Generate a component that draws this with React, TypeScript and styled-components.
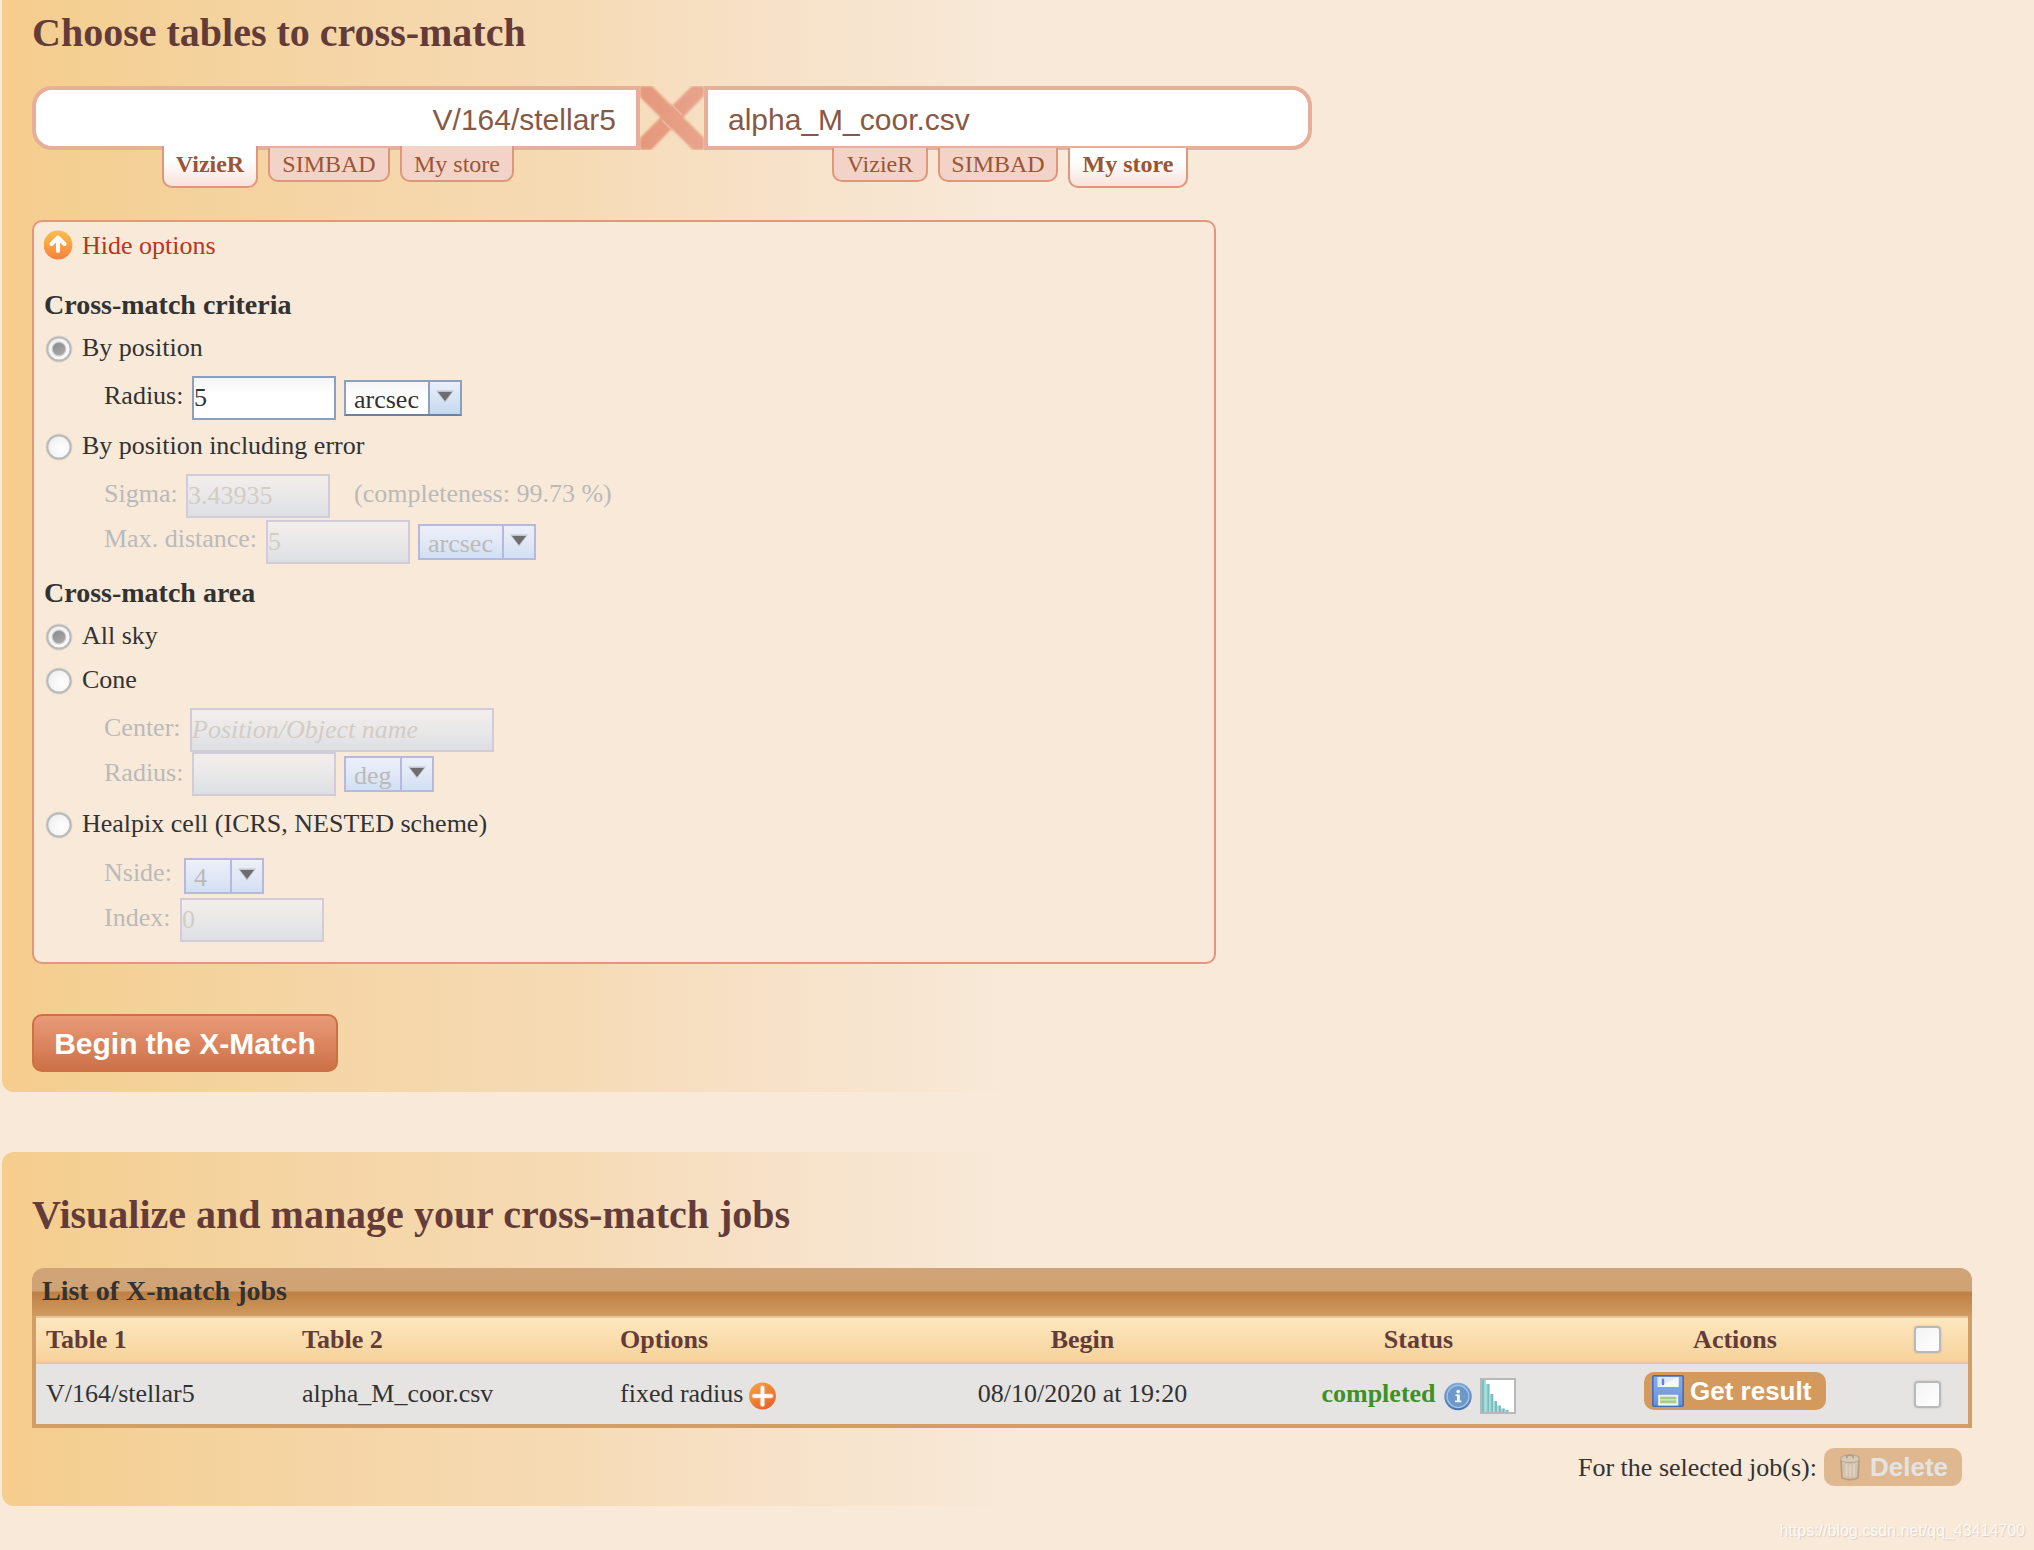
import React from "react";
import styled, { createGlobalStyle, css } from "styled-components";

const serif = `"Liberation Serif", "Times New Roman", Times, serif`;
const sans = `"Liberation Sans", Arial, Helvetica, sans-serif`;

const GlobalStyle = createGlobalStyle`
  *, *::before, *::after { box-sizing: border-box; }
  html, body { margin: 0; padding: 0; }
  body {
    background: #f8e9d9;
    color: #323232;
    font-family: ${serif};
    font-size: 26px;
    line-height: 30px;
    overflow: hidden;
  }
  svg { display: block; flex: none; }
`;

const Page = styled.main`
  height: 1550px;
  padding-left: 2px;
  display: flex;
  flex-direction: column;
`;

const Panel = styled.section<{ $first?: boolean }>`
  height: ${(p) => (p.$first ? 1092 : 354)}px;
  margin-top: ${(p) => (p.$first ? 0 : 60)}px;
  padding: ${(p) => (p.$first ? 9 : 39)}px 62px 0 30px;
  border-radius: ${(p) => (p.$first ? "0 0 0 12px" : "12px 0 0 12px")};
  background: linear-gradient(90deg, #f5cd8d 0, #f4d095 100px, #f5d6a8 360px, #f6dab4 560px, #f7e1c7 760px, #f8e9d9 1016px);
  display: flex;
  flex-direction: column;
  align-items: flex-start;
  flex: none;
`;

const Heading = styled.h2`
  margin: 0;
  height: 47px;
  color: #633c3a;
  font-size: 40px;
  font-weight: bold;
  line-height: 47px;
  white-space: nowrap;
`;

/* ---------- table pickers ---------- */

const Pickers = styled.div`
  display: flex;
  margin-top: 30px;
  height: 134px;
`;

const Picker = styled.div`
  width: 608px;
  display: flex;
  flex-direction: column;
`;

const TableInput = styled.div<{ $side: "left" | "right" }>`
  height: 64px;
  flex: none;
  border: 4px solid #e7ae99;
  border-radius: ${(p) => (p.$side === "left" ? "20px 0 0 20px" : "0 20px 20px 0")};
  background: #fff;
  color: #865945;
  font: 30px/54px ${sans};
  padding: 3px 20px 0;
  text-align: ${(p) => (p.$side === "left" ? "right" : "left")};
`;

const CrossMark = styled.div`
  width: 64px;
  height: 64px;
`;

const Tabs = styled.div<{ $inset: number; $columns: string }>`
  display: grid;
  grid-template-columns: ${(p) => p.$columns};
  column-gap: 10px;
  align-items: start;
  padding-left: ${(p) => p.$inset}px;
  margin-top: -4px;
  position: relative;
`;

const Tab = styled.div<{ $active?: boolean; $low?: boolean }>`
  height: ${(p) => (p.$active ? 42 : 36) - (p.$low ? 2 : 0)}px;
  margin-top: ${(p) => (p.$low ? 2 : 0)}px;
  padding-top: ${(p) => (p.$low ? 2 : 4)}px;
  border: 2px solid #e29679;
  border-top: 0;
  border-radius: 0 0 10px 10px;
  background: ${(p) => (p.$active ? "linear-gradient(#fff 35%, #f9e2da)" : "#f3d3c7")};
  color: #9a5535;
  font-size: 24px;
  font-weight: ${(p) => (p.$active ? "bold" : "normal")};
  line-height: 29px;
  text-align: center;
  white-space: nowrap;
`;

/* ---------- options ---------- */

const Options = styled.div`
  width: 1184px;
  height: 744px;
  flex: none;
  border: 2px solid #e4957a;
  border-radius: 10px;
  background: #f8e9d9;
  padding-left: 10px;
  display: flex;
  flex-direction: column;
`;

const HideOptions = styled.a`
  display: flex;
  align-items: center;
  gap: 8px;
  height: 46px;
  color: #b73620;
`;

const LinkText = styled.span`
  padding-top: 2px;
`;

const GroupTitle = styled.h3<{ $top: number }>`
  margin: ${(p) => p.$top}px 0 0;
  font-size: 28px;
  line-height: 37px;
  height: 37px;
`;

const Choice = styled.label<{ $top: number }>`
  display: flex;
  align-items: center;
  gap: 8px;
  height: 30px;
  line-height: 30px;
  margin-top: ${(p) => p.$top}px;
  svg { margin-top: 3px; }
`;

const ChoiceText = styled.span`
  padding-top: 2px;
  white-space: nowrap;
`;

const FieldRow = styled.div<{ $top?: number; $disabled?: boolean }>`
  display: flex;
  align-items: center;
  height: 44px;
  margin-top: ${(p) => p.$top ?? 0}px;
  padding-left: 60px;
  color: ${(p) => (p.$disabled ? "#bababa" : "#323232")};
`;

const FieldLabel = styled.span<{ $width: number; $raise?: number }>`
  width: ${(p) => p.$width}px;
  padding-bottom: ${(p) => p.$raise ?? 4}px;
  white-space: nowrap;
`;

const Hint = styled.span`
  margin-left: 24px;
  padding-bottom: 4px;
`;

const TextBox = styled.div<{ $width?: number; $disabled?: boolean; $italic?: boolean }>`
  width: ${(p) => p.$width ?? 144}px;
  height: 44px;
  border: 2px solid #8aa0c0;
  background: linear-gradient(#f5f5f5, #fff 40%);
  line-height: 39px;
  white-space: nowrap;
  font-style: ${(p) => (p.$italic ? "italic" : "normal")};
  ${(p) =>
    p.$disabled &&
    css`
      border-color: #d2cbd9;
      background: linear-gradient(#f2eeeb, #e7e7e8 60%, #dcdfe3);
      color: #d3ccc5;
    `}
`;

const SelectBox = styled.div<{ $disabled?: boolean; $width: number; $gap?: boolean }>`
  display: flex;
  width: ${(p) => p.$width}px;
  height: 36px;
  margin-left: ${(p) => (p.$gap ? 8 : 0)}px;
  border: 2px solid ${(p) => (p.$disabled ? "#b6b8de" : "#8ba1c0")};
  border-bottom-color: ${(p) => (p.$disabled ? "#b6b8de" : "#6981a6")};
  background: ${(p) =>
    p.$disabled ? "linear-gradient(#edf0fa, #dfe6f5 60%, #d0e0f2)" : "linear-gradient(#f5f5f5, #fff 50%)"};
`;

const SelectText = styled.span`
  flex: 1;
  padding: 2px 0 0 8px;
  line-height: 32px;
`;

const SelectArrow = styled.span<{ $disabled?: boolean }>`
  width: 32px;
  border-left: 2px solid ${(p) => (p.$disabled ? "#b6b8de" : "#8ba1c0")};
  background: ${(p) => (p.$disabled ? "none" : "linear-gradient(#eaf0fb, #c5d8ee)")};
  display: flex;
  justify-content: center;
  padding-top: 6px;
`;

const BeginButton = styled.button`
  width: 306px;
  height: 58px;
  margin-top: 50px;
  padding: 1px 0 0;
  border: 2px solid #ce6f46;
  border-radius: 10px;
  background: linear-gradient(#e99a78, #cd7147);
  color: #fff;
  font: bold 30px/52px ${sans};
  white-space: nowrap;
`;

/* ---------- jobs ---------- */

const Jobs = styled.div`
  width: 1940px;
  height: 160px;
  flex: none;
  margin-top: 30px;
`;

const JobsTitle = styled.div`
  height: 48px;
  padding-left: 10px;
  border-radius: 12px 12px 0 0;
  background: linear-gradient(#d1a478 0, #d0a375 23px, #be8044 24px, #d09a60 48px);
  font-size: 28px;
  font-weight: bold;
  line-height: 45px;
`;

const JobsGrid = styled.div`
  border: 4px solid #d39d66;
  border-top: 0;
`;

const columns = "256px 318px 302px 341px 331px 302px 82px";

const HeadRow = styled.div`
  display: grid;
  grid-template-columns: ${columns};
  height: 48px;
  border-top: 2px solid #e7c69d;
  border-bottom: 2px solid #e7c69d;
  background: linear-gradient(#fee7bf, #f6d299);
  color: #633c3a;
  font-weight: bold;
`;

const JobRow = styled.div`
  display: grid;
  grid-template-columns: ${columns};
  height: 60px;
  background: #e5e4e2;
`;

const Cell = styled.div<{ $center?: boolean; $gap?: number; $raise?: number }>`
  display: flex;
  align-items: center;
  justify-content: ${(p) => (p.$center ? "center" : "flex-start")};
  gap: ${(p) => p.$gap ?? 0}px;
  padding: 0 ${(p) => (p.$center ? 0 : 10)}px ${(p) => p.$raise ?? 0}px;
  white-space: nowrap;
`;

const Completed = styled.b`
  color: #3c9127;
`;

const Lowered = styled.span`
  padding-top: 4px;
`;

const SmallButton = styled.button<{ $width: number; $disabled?: boolean }>`
  display: flex;
  align-items: center;
  gap: 6px;
  width: ${(p) => p.$width}px;
  height: 38px;
  padding: 0 0 0 ${(p) => (p.$disabled ? 12 : 8)}px;
  border: 0;
  border-radius: 10px;
  background: ${(p) => (p.$disabled ? "#dfb88f" : "#d4995d")};
  color: ${(p) => (p.$disabled ? "#e3e3e3" : "#fff")};
  font: bold 26px/38px ${sans};
  white-space: nowrap;
`;

const SelectedActions = styled.div`
  align-self: flex-end;
  display: flex;
  align-items: center;
  gap: 7px;
  height: 38px;
  margin: 20px 10px 0 0;
  white-space: nowrap;
`;

const SelectedLabel = styled.span`
  padding-top: 2px;
`;

const CheckBox = styled.span`
  width: 27px;
  height: 27px;
  border: 2px solid #b9b9b9;
  border-radius: 4px;
  background: linear-gradient(135deg, #f3f3f3, #fff);
  box-shadow: 0 0 2px rgba(150, 150, 150, 0.5);
`;

const Watermark = styled.div`
  align-self: flex-end;
  margin: 16px 9px 0 0;
  color: #fdf8f3;
  font: 16px/18px ${sans};
  text-shadow: 1px 1px 1px #d9cec3;
`;

/* ---------- drawings ---------- */

const CrossIcon = () => (
  <svg width="64" height="64" viewBox="0 0 64 64">
    <defs>
      <linearGradient id="crossFill" x1="0" x2="1">
        <stop offset="0" stopColor="#e5977b" />
        <stop offset="1" stopColor="#e7a48c" />
      </linearGradient>
      <filter id="soft" x="-5%" y="-5%" width="110%" height="110%">
        <feGaussianBlur stdDeviation="0.9" />
      </filter>
    </defs>
    <g filter="url(#soft)">
      <path d="M0 52 L52 0 L64 0 L64 10 L11 64 L0 64Z" fill="url(#crossFill)" />
      <path d="M0 0 L12 0 L64 52 L64 64 L53 64 L0 11Z" fill="url(#crossFill)" />
    </g>
    <path d="M22 34 L33 45 M31 18 L42 29" stroke="#edb8a2" strokeWidth="1.5" fill="none" />
  </svg>
);

const UpIcon = () => (
  <svg width="30" height="30" viewBox="0 0 30 30">
    <defs>
      <linearGradient id="upFill" x1="0" x2="0" y1="0" y2="1">
        <stop offset="0" stopColor="#f9bd49" />
        <stop offset="0.5" stopColor="#f8a244" />
        <stop offset="1" stopColor="#f67f40" />
      </linearGradient>
    </defs>
    <circle cx="14" cy="15" r="14.4" fill="url(#upFill)" />
    <path d="M14 9 V21" stroke="#fff" strokeWidth="4" strokeLinecap="round" />
    <path d="M7.5 14 L14 7.5 L20.5 14" stroke="#fff" strokeWidth="4" fill="none" strokeLinecap="round" strokeLinejoin="round" />
  </svg>
);

const RadioIcon = ({ checked }: { checked?: boolean }) => (
  <svg width="30" height="28" viewBox="0 0 30 28">
    <defs>
      <radialGradient id="radioBg" cx="0.6" cy="0.6" r="0.6">
        <stop offset="0" stopColor="#fff" />
        <stop offset="1" stopColor="#f0f0f0" />
      </radialGradient>
      <linearGradient id="radioDot" x1="0.2" y1="0" x2="0.8" y2="1">
        <stop offset="0" stopColor="#8c8c8c" />
        <stop offset="1" stopColor="#a9a9a9" />
      </linearGradient>
    </defs>
    <circle cx="15" cy="14" r="13.4" fill="#cfc9c2" opacity="0.6" />
    <circle cx="15" cy="14" r="11.6" fill="url(#radioBg)" stroke="#b9b9b9" strokeWidth="2" />
    {checked && <circle cx="15" cy="14" r="7.4" fill="#c9cbcd" />}
    {checked && <circle cx="15" cy="14" r="6.2" fill="url(#radioDot)" />}
  </svg>
);

const ArrowIcon = () => (
  <svg width="20" height="16" viewBox="0 0 20 16">
    <path d="M1 2.5 H19 L10 14.5Z" fill="#a9abb0" opacity="0.6" />
    <path d="M3 4 H17 L10 13Z" fill="#6d6d6d" />
  </svg>
);

const PlusIcon = () => (
  <svg width="28" height="28" viewBox="0 0 28 28">
    <defs>
      <linearGradient id="plusFill" x1="0.2" x2="0.8" y1="0" y2="1">
        <stop offset="0" stopColor="#f3a13c" />
        <stop offset="1" stopColor="#e4602c" />
      </linearGradient>
    </defs>
    <circle cx="13.5" cy="14" r="13.4" fill="url(#plusFill)" />
    <path d="M13.5 5.5 V22.5 M5 14 H22" stroke="#f2a070" strokeWidth="5.5" strokeLinecap="round" />
    <path d="M13.5 5.5 V22.5 M5 14 H22" stroke="#fff" strokeWidth="3.6" strokeLinecap="round" />
  </svg>
);

const InfoIcon = () => (
  <svg width="28" height="29" viewBox="0 0 29 29">
    <defs>
      <linearGradient id="infoFill" x1="0" x2="0" y1="0" y2="1">
        <stop offset="0" stopColor="#7fa9d9" />
        <stop offset="1" stopColor="#4a72b0" />
      </linearGradient>
    </defs>
    <circle cx="14.5" cy="14.5" r="14.2" fill="url(#infoFill)" />
    <circle cx="14.5" cy="14.5" r="11.4" fill="#6c99ca" stroke="#a5c4e6" strokeWidth="1.3" />
    <circle cx="14.7" cy="9.3" r="1.9" fill="#f4f8fc" />
    <path d="M11.8 13.2 H15 M11.4 19.6 H18" stroke="#f4f8fc" strokeWidth="1.8" fill="none" />
    <path d="M14.9 12.4 V20" stroke="#f4f8fc" strokeWidth="3" />
  </svg>
);

const bars = [32, 28, 18, 11, 6.5, 3.5, 2];

const HistogramIcon = () => (
  <svg width="36" height="36" viewBox="0 0 36 36">
    <rect x="1" y="1" width="34" height="34" fill="#fff" stroke="#b8b8b8" strokeWidth="2" />
    {bars.map((h, i) => (
      <g key={i}>
        <rect x={2 + i * 3.8} y={34 - h} width="3.8" height={h} fill="#a4d6d6" />
        <rect x={3.6 + i * 3.8 - (i ? 0 : 1.6)} y={34 - h} width="1.9" height={h} fill="#74bfbf" />
      </g>
    ))}
  </svg>
);

const FloppyIcon = () => (
  <svg width="32" height="32" viewBox="0 0 32 32">
    <defs>
      <linearGradient id="disk" x1="0" x2="0" y1="0" y2="1">
        <stop offset="0" stopColor="#86abe6" />
        <stop offset="0.5" stopColor="#7ba0e0" />
        <stop offset="1" stopColor="#6592d8" />
      </linearGradient>
    </defs>
    <rect x="0" y="0" width="32" height="32" rx="2" fill="#416db8" />
    <rect x="1.6" y="1.6" width="28.8" height="28.8" rx="1" fill="url(#disk)" />
    <rect x="5.5" y="2" width="21" height="10" fill="#e3e9f4" />
    <path d="M5.5 12 L26.5 2 V12Z" fill="#f6f8fc" />
    <rect x="9.8" y="3.6" width="2.4" height="6.6" rx="1" fill="#5f86c6" />
    <rect x="6.2" y="19.8" width="20" height="10.8" fill="#f2f6ea" />
    <rect x="8" y="21.6" width="16.4" height="2.8" fill="#a9cb82" />
    <rect x="8" y="24.4" width="16.4" height="1" fill="#cfe0b8" />
    <rect x="8" y="25.4" width="16.4" height="2.8" fill="#a9cb82" />
  </svg>
);

const TrashIcon = () => (
  <svg width="28" height="32" viewBox="0 0 28 32">
    <path d="M5 9 L6 27 Q14 30.5 22 27 L23 9Z" fill="#d3c2ae" stroke="#b89f82" strokeWidth="1.8" />
    <path d="M10.5 13 V25 M14.2 13.5 V25.5 M18 13 V25" stroke="#e0d3c4" strokeWidth="1.8" />
    <path d="M4.5 8 Q5 4 14 4 Q23 4 23.5 8 Q23 11.5 14 11.5 Q5 11.5 4.5 8Z" fill="#d8cab9" stroke="#bfa88e" strokeWidth="1.4" />
    <path d="M10.5 7.5 Q11 4 14 4 Q17 4 17.5 7.5" stroke="#b39b80" strokeWidth="1.5" fill="none" />
  </svg>
);

/* ---------- composed parts ---------- */

const Select = ({ value, width, disabled, gap }: { value: string; width: number; disabled?: boolean; gap?: boolean }) => (
  <SelectBox $width={width} $disabled={disabled} $gap={gap}>
    <SelectText>{value}</SelectText>
    <SelectArrow $disabled={disabled}>
      <ArrowIcon />
    </SelectArrow>
  </SelectBox>
);

const RadioChoice = ({ label, top, checked }: { label: string; top: number; checked?: boolean }) => (
  <Choice $top={top}>
    <RadioIcon checked={checked} />
    <ChoiceText>{label}</ChoiceText>
  </Choice>
);

const App = () => (
  <>
    <GlobalStyle />
    <Page>
      <Panel $first>
        <Heading>Choose tables to cross-match</Heading>
        <Pickers>
          <Picker>
            <TableInput $side="left">V/164/stellar5</TableInput>
            <Tabs $inset={130} $columns="96px 122px 114px">
              <Tab $active>VizieR</Tab>
              <Tab $low>SIMBAD</Tab>
              <Tab>My store</Tab>
            </Tabs>
          </Picker>
          <CrossMark>
            <CrossIcon />
          </CrossMark>
          <Picker>
            <TableInput $side="right">alpha_M_coor.csv</TableInput>
            <Tabs $inset={128} $columns="96px 120px 120px">
              <Tab $low>VizieR</Tab>
              <Tab $low>SIMBAD</Tab>
              <Tab $low $active>My store</Tab>
            </Tabs>
          </Picker>
        </Pickers>

        <Options>
          <HideOptions>
            <UpIcon />
            <LinkText>Hide options</LinkText>
          </HideOptions>

          <GroupTitle $top={18}>Cross-match criteria</GroupTitle>
          <RadioChoice top={9} label="By position" checked />
          <FieldRow $top={14}>
            <FieldLabel $width={88}>Radius:</FieldLabel>
            <TextBox>5</TextBox>
            <Select value="arcsec" width={118} gap />
          </FieldRow>
          <RadioChoice top={10} label="By position including error" />
          <FieldRow $top={14} $disabled>
            <FieldLabel $width={82}>Sigma:</FieldLabel>
            <TextBox $disabled>3.43935</TextBox>
            <Hint>(completeness: 99.73 %)</Hint>
          </FieldRow>
          <FieldRow $top={2} $disabled>
            <FieldLabel $width={162} $raise={6}>
              Max. distance:
            </FieldLabel>
            <TextBox $disabled>5</TextBox>
            <Select value="arcsec" width={118} disabled gap />
          </FieldRow>

          <GroupTitle $top={10}>Cross-match area</GroupTitle>
          <RadioChoice top={9} label="All sky" checked />
          <RadioChoice top={14} label="Cone" />
          <FieldRow $top={14} $disabled>
            <FieldLabel $width={86}>Center:</FieldLabel>
            <TextBox $disabled $italic $width={304}>
              Position/Object name
            </TextBox>
          </FieldRow>
          <FieldRow $disabled>
            <FieldLabel $width={88} $raise={2}>
              Radius:
            </FieldLabel>
            <TextBox $disabled />
            <Select value="deg" width={90} disabled gap />
          </FieldRow>
          <RadioChoice top={12} label="Healpix cell (ICRS, NESTED scheme)" />
          <FieldRow $top={16} $disabled>
            <FieldLabel $width={80} $raise={6}>
              Nside:
            </FieldLabel>
            <Select value="4" width={80} disabled />
          </FieldRow>
          <FieldRow $disabled>
            <FieldLabel $width={76}>Index:</FieldLabel>
            <TextBox $disabled>0</TextBox>
          </FieldRow>
        </Options>

        <BeginButton>Begin the X-Match</BeginButton>
      </Panel>

      <Panel>
        <Heading>Visualize and manage your cross-match jobs</Heading>
        <Jobs>
          <JobsTitle>List of X-match jobs</JobsTitle>
          <JobsGrid>
            <HeadRow>
              <Cell>Table 1</Cell>
              <Cell>Table 2</Cell>
              <Cell>Options</Cell>
              <Cell $center>Begin</Cell>
              <Cell $center>Status</Cell>
              <Cell $center>Actions</Cell>
              <Cell $center $raise={2}>
                <CheckBox />
              </Cell>
            </HeadRow>
            <JobRow>
              <Cell>V/164/stellar5</Cell>
              <Cell>alpha_M_coor.csv</Cell>
              <Cell $gap={6}>
                fixed radius
                <Lowered>
                  <PlusIcon />
                </Lowered>
              </Cell>
              <Cell $center>08/10/2020 at 19:20</Cell>
              <Cell $center $gap={8}>
                <Completed>completed</Completed>
                <Lowered>
                  <InfoIcon />
                </Lowered>
                <Lowered>
                  <HistogramIcon />
                </Lowered>
              </Cell>
              <Cell $center $raise={6}>
                <SmallButton $width={182}>
                  <FloppyIcon />
                  Get result
                </SmallButton>
              </Cell>
              <Cell $center>
                <CheckBox />
              </Cell>
            </JobRow>
          </JobsGrid>
        </Jobs>
        <SelectedActions>
          <SelectedLabel>For the selected job(s):</SelectedLabel>
          <SmallButton $width={138} $disabled>
            <TrashIcon />
            Delete
          </SmallButton>
        </SelectedActions>
      </Panel>

      <Watermark>https://blog.csdn.net/qq_43414700</Watermark>
    </Page>
  </>
);

export default App;
